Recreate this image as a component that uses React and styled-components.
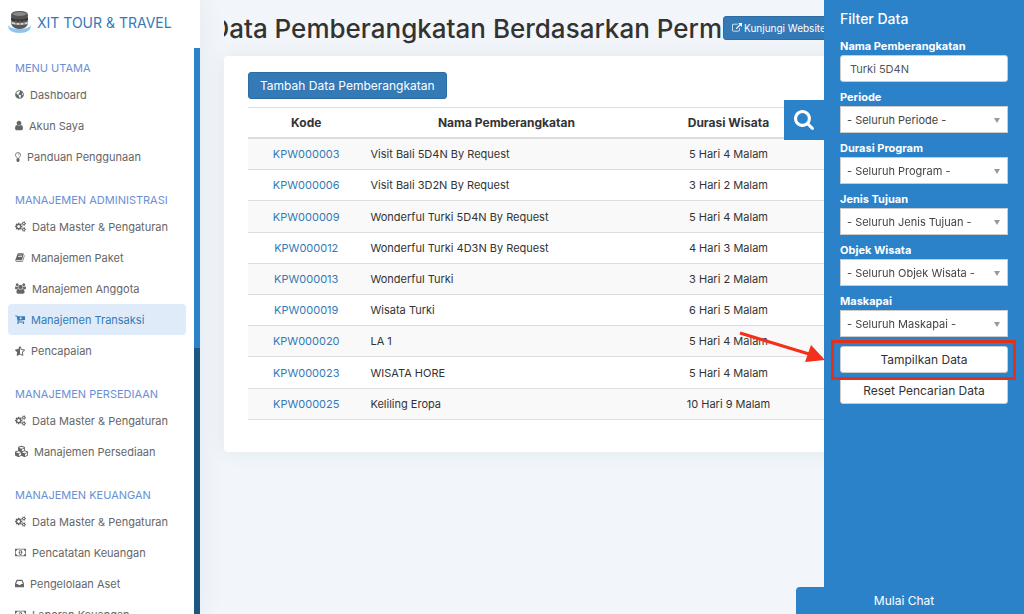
import React from 'react';
import styled, { createGlobalStyle } from 'styled-components';
import { FaCubes, FaGlobeAmericas, FaStarHalfAlt } from 'react-icons/fa';

const GlobalStyle = createGlobalStyle`
  * {
    box-sizing: border-box;
  }
  body {
    margin: 0;
    background: #f2f6fa;
    color: #333;
    font-family: Inter, 'Open Sans', sans-serif;
    font-size: 11px;
  }
  button, input, select {
    font: inherit;
  }
`;

const StyledPage = styled.div`
  display: flex;
  height: 100vh;
  overflow: hidden;
`;

/* Sidebar */
const StyledSidebar = styled.aside`
  display: flex;
  flex: none;
  flex-direction: column;
  width: 200px;
  background: white;
  box-shadow: 0 0 24px rgba(40, 70, 120, 0.08);
`;
const StyledBrand = styled.a`
  display: flex;
  flex: none;
  align-items: center;
  gap: 6px;
  height: 48px;
  padding: 0 8px 4px;
  color: #337ab7;
  font-size: 14px;
  text-decoration: none;
  white-space: nowrap;
`;
const StyledSidebarBody = styled.div`
  display: flex;
  flex: 1;
  min-height: 0;
`;
const StyledNav = styled.nav`
  display: flex;
  flex: 1;
  flex-direction: column;
  gap: 17px;
  padding: 9px 8px 0;
  overflow: hidden;
`;
const StyledNavTitle = styled.h2`
  margin: 0;
  padding-left: 7px;
  color: #6a8fd4;
  font-size: 11px;
  font-weight: 400;
  line-height: 22px;
  white-space: nowrap;
`;
const StyledNavLink = styled.a`
  display: flex;
  align-items: center;
  gap: 6px;
  height: 31px;
  padding-left: 7px;
  border-radius: 4px;
  background: ${(props) => (props.$active ? '#e0ebfa' : 'transparent')};
  color: ${(props) => (props.$active ? '#337ab7' : '#666')};
  text-decoration: none;
  white-space: nowrap;
`;
const StyledTrack = styled.div`
  flex: none;
  width: 6px;
  background: #1d5780;
`;
const StyledThumb = styled.div`
  height: 53%;
  background: #2b82c9;
`;

/* Content */
const StyledMain = styled.main`
  flex: 1;
  min-width: 0;
  padding: 0 24px;
`;
const StyledHeader = styled.header`
  display: flex;
  align-items: center;
  height: 56px;
`;
const StyledHeading = styled.div`
  display: flex;
  flex: 1;
  justify-content: flex-end;
  min-width: 0;
  padding-top: 2px;
  overflow: hidden;
`;
const StyledHeadingText = styled.h1`
  margin: 0;
  font-size: 26px;
  font-weight: 500;
  line-height: 36px;
  white-space: nowrap;
`;
const StyledHeaderActions = styled.div`
  flex: 0 0 278px;
  padding-left: 1px;
`;
const StyledSiteButton = styled.button`
  display: inline-flex;
  align-items: center;
  gap: 2px;
  height: 24px;
  padding: 0 8px;
  border: 1px solid #2e6da4;
  border-radius: 3px;
  background: #337ab7;
  color: white;
  font-size: 10px;
  white-space: nowrap;
`;
const StyledCard = styled.section`
  padding: 16px 24px 32px;
  border-radius: 4px;
  background: white;
  box-shadow: 0 0 20px rgba(40, 60, 90, 0.08);
`;
const StyledAddButton = styled.button`
  display: block;
  height: 27px;
  margin-bottom: 8px;
  padding: 0 11px;
  border: 1px solid #2e6da4;
  border-radius: 3px;
  background: #337ab7;
  color: white;
  font-size: 12px;
  white-space: nowrap;
`;
const StyledTable = styled.table`
  width: 100%;
  height: 313px;
  border-collapse: collapse;
  table-layout: fixed;

  th {
    height: 30px;
    padding: 0 6px;
    border-top: 1px solid #ddd;
    border-bottom: 2px solid #ddd;
    font-size: 12px;
    font-weight: 700;
    text-align: center;
  }
  td {
    padding: 0 6px;
    border-bottom: 1px solid #ddd;
  }
  tbody tr:nth-child(odd) {
    background: #f9f9f9;
  }
`;
const StyledCol = styled.col`
  width: ${(props) => props.$width};
`;
const StyledCell = styled.td`
  text-align: ${(props) => props.$align || 'left'};
`;
const StyledCodeLink = styled.a`
  color: #337ab7;
  text-decoration: none;
`;

/* Filter drawer */
const StyledDrawer = styled.aside`
  position: fixed;
  top: 0;
  right: 0;
  bottom: 0;
  width: 200px;
  padding: 8px 16px;
  background: #2b82c9;
  color: white;
`;
const StyledDrawerToggle = styled.button`
  position: absolute;
  top: 100px;
  right: 100%;
  display: flex;
  align-items: center;
  justify-content: center;
  width: 40px;
  height: 40px;
  padding: 0;
  border: 0;
  background: #2b82c9;
  color: white;
`;
const StyledDrawerTitle = styled.h2`
  margin: 0 0 7px;
  font-size: 14px;
  font-weight: 500;
  line-height: 22px;
`;
const StyledField = styled.div`
  display: flex;
  flex-direction: column;
  margin-bottom: 6px;
`;
const StyledLabel = styled.label`
  font-size: 11px;
  font-weight: 700;
  line-height: 18px;
`;
const StyledInput = styled.input`
  width: 100%;
  height: 27px;
  padding: 0 9px;
  border: 1px solid #ccc;
  border-radius: 3px;
  background: white;
  color: #555;
`;
const StyledSelectWrapper = styled.div`
  position: relative;

  &::after {
    position: absolute;
    top: 12px;
    right: 8px;
    border: 3px solid transparent;
    border-top: 5px solid #999;
    border-bottom: 0;
    content: '';
    pointer-events: none;
  }
`;
const StyledSelect = styled.select`
  display: block;
  width: 100%;
  height: 27px;
  padding: 0 16px 0 6px;
  border: 1px solid #ccc;
  border-radius: 0;
  appearance: none;
  background: white;
  color: #444;
`;
const StyledDrawerActions = styled.div`
  display: flex;
  flex-direction: column;
  gap: 4px;
  padding-top: 3px;
`;
const StyledDrawerButton = styled.button`
  width: 100%;
  height: 27px;
  border: 1px solid #ccc;
  border-radius: 3px;
  background: white;
  color: #333;
  font-size: 12px;
`;
const StyledHighlight = styled.div`
  position: relative;

  &::after {
    position: absolute;
    inset: -6px -8px -7px -9px;
    border: 3px solid #e2301a;
    content: '';
    pointer-events: none;
  }
`;
const StyledArrow = styled.svg`
  position: absolute;
  top: -18px;
  right: calc(100% + 15px);
  width: 88px;
  height: 38px;
`;
const StyledChat = styled.button`
  position: fixed;
  right: 12px;
  bottom: 0;
  width: 216px;
  height: 27px;
  padding: 0;
  border: 0;
  border-radius: 4px 0 0 0;
  background: #2b82c9;
  color: white;
  font-size: 12px;
`;

const gear =
  'v140q0 16-149 31-12 27-30 52 51 113 51 138 0 4-4 7-122 71-124 71-8 0-46-47t-52-68q-20 2-30 2t-30-2q-14 21-52 68t-46 47q-2 0-124-71-4-3-4-7 0-25 51-138-18-25-30-52-149-15-149-31v-140q0-16 149-31 13-29 30-52-51-113-51-138 0-4 4-7 4-2 35-20t59-34 30-16q8 0 46 46.5t52 67.5q20-2 30-2t30 2q51-71 92-112l6-2q4 0 124 70 4 3 4 7 0 25-51 138 17 23 30 52 149 15 149 31z';

const Glyph = ({ d, box = '0 0 1792 1792', width = 11, height = 11 }) => (
  <svg
    viewBox={box}
    width={width}
    height={height}
    fill="currentColor"
    aria-hidden="true"
  >
    <path d={d} />
  </svg>
);

const UserIcon = () => (
  <Glyph
    box="256 0 1280 1792"
    width={8}
    d="M1536 1399q0 109-62.5 187t-150.5 78h-854q-88 0-150.5-78t-62.5-187q0-85 8.5-160.5t31.5-152 58.5-131 94-89 134.5-34.5q131 128 313 128t313-128q76 0 134.5 34.5t94 89 58.5 131 31.5 152 8.5 160.5zm-256-887q0 159-112.5 271.5t-271.5 112.5-271.5-112.5-112.5-271.5 112.5-271.5 271.5-112.5 271.5 112.5 112.5 271.5z"
  />
);
const BulbIcon = () => (
  <svg width="6" height="10" viewBox="0 0 12 20" aria-hidden="true">
    <path
      d="M4 13Q4 11 2.500 9.500Q1 8 1 6Q1 1 6 1T11 6Q11 8 9.500 9.500Q8 11 8 13z"
      fill="none"
      stroke="currentColor"
      strokeWidth="1.600"
    />
    <path
      d="M6 4Q8.500 4 8.500 6"
      fill="none"
      stroke="currentColor"
      strokeWidth="1.200"
    />
    <path d="M3 14h6v4l-2 2h-2l-2-2z" fill="currentColor" />
  </svg>
);
const CogsIcon = () => (
  <Glyph
    box="0 0 1920 1792"
    d={`M896 896q0-106-75-181t-181-75-181 75-75 181 75 181 181 75 181-75 75-181zm768 512q0-52-38-90t-90-38-90 38-38 90q0 53 37.5 90.5t90.5 37.5 90.5-37.5 37.5-90.5zm0-1024q0-52-38-90t-90-38-90 38-38 90q0 53 37.5 90.5t90.5 37.5 90.5-37.5 37.5-90.5zm-384 421v185q0 10-7 19.5t-16 10.5l-155 24q-11 35-32 76 34 48 90 115 7 11 7 20 0 12-7 19-23 30-82.5 89.5t-78.5 59.5q-11 0-21-7l-115-90q-37 19-77 31-11 108-23 155-7 24-30 24h-186q-11 0-20-7.5t-10-17.5l-23-153q-34-10-75-31l-118 89q-7 7-20 7-11 0-21-8-144-133-144-160 0-9 7-19 10-14 41-53t47-61q-23-44-35-82l-152-24q-10-1-17-9.5t-7-19.5v-185q0-10 7-19.5t16-10.5l155-24q11-35 32-76-34-48-90-115-7-11-7-20 0-12 7-20 22-30 82-89t79-59q11 0 21 7l115 90q34-18 77-32 11-108 23-154 7-24 30-24h186q11 0 20 7.5t10 17.5l23 153q34 10 75 31l118-89q8-7 20-7 11 0 21 8 144 133 144 160 0 8-7 19-12 16-42 54t-45 60q23 48 34 82l152 23q10 2 17 10.5t7 19.5zM1920 1338${gear}M1920 314${gear}`}
  />
);
const BookIcon = () => (
  <Glyph
    width={10}
    d="M1703 478q40 57 18 129l-275 906q-19 64-76.5 107.5t-122.5 43.5h-923q-77 0-148.5-53.5t-99.5-131.5q-24-67-2-127 0-4 3-27t4-37q1-8-3-21.5t-3-19.5q2-11 8-21t16.5-23.5 16.5-23.5q23-38 45-91.5t30-91.5q3-10 .5-30t-.5-28q3-11 17-28t17-23q21-36 42-92t25-90q1-9-2.5-32t.5-28q4-13 22-30.5t22-22.5q19-26 42.5-84.5t27.5-96.5q1-8-3-25.5t-2-26.5q2-8 9-18t18-23 17-21q8-12 16.5-30.5t15-35 16-36 19.5-32 26.5-23.5 36-11.5 47.5 5.5l-1 3q38-9 51-9h761q74 0 114 56t18 130l-274 906q-36 119-71.5 153.5t-128.5 34.5h-869q-27 0-38 15-11 16-1 43 24 70 144 70h923q29 0 56-15.5t35-41.5l300-987q7-22 5-57 38 15 59 43zm-1064 2q-4 13 2 22.5t20 9.5h608q13 0 25.5-9.5t16.5-22.5l21-64q4-13-2-22.5t-20-9.5h-608q-13 0-25.5 9.5t-16.5 22.5zm-83 256q-4 13 2 22.5t20 9.5h608q13 0 25.5-9.5t16.5-22.5l21-64q4-13-2-22.5t-20-9.5h-608q-13 0-25.5 9.5t-16.5 22.5z"
  />
);
const UsersIcon = () => (
  <Glyph
    box="0 0 1920 1792"
    d="M593 896q-162 5-265 128h-134q-82 0-138-40.5t-56-118.5q0-353 124-353 6 0 43.5 21t97.5 42.5 119 21.5q67 0 133-23-5 37-5 66 0 139 81 256zm1071 637q0 120-73 189.5t-194 69.5h-874q-121 0-194-69.5t-73-189.5q0-53 3.5-103.5t14-109 26.5-108.5 43-97.5 62-81 85.5-53.5 111.5-20q10 0 43 21.5t73 48 107 48 135 21.5 135-21.5 107-48 73-48 43-21.5q61 0 111.5 20t85.5 53.5 62 81 43 97.5 26.5 108.5 14 109 3.5 103.5zm-1024-1277q0 106-75 181t-181 75-181-75-75-181 75-181 181-75 181 75 75 181zm704 384q0 159-112.5 271.5t-271.5 112.5-271.5-112.5-112.5-271.5 112.5-271.5 271.5-112.5 271.5 112.5 112.5 271.5zm576 225q0 78-56 118.5t-138 40.5h-134q-103-123-265-128 81-117 81-256 0-29-5-66 66 23 133 23 59 0 119-21.5t97.5-42.5 43.5-21q124 0 124 353zm-128-609q0 106-75 181t-181 75-181-75-75-181 75-181 181-75 181 75 75 181z"
  />
);
const CartIcon = () => (
  <Glyph
    box="64 128 1664 1600"
    width={10}
    d="M1280 704q0-26-19-45t-45-19h-128v-128q0-26-19-45t-45-19-45 19-19 45v128h-128q-26 0-45 19t-19 45 19 45 45 19h128v128q0 26 19 45t45 19 45-19 19-45v-128h128q26 0 45-19t19-45zM704 1536a128 128 0 1 1-256 0a128 128 0 1 1 256 0zM1600 1536a128 128 0 1 1-256 0a128 128 0 1 1 256 0zM1728 448v512q0 24-16 42.5t-41 21.5l-1044 122q1 7 4.500 21.500t6 26.500 2.500 22q0 16-24 64h920q26 0 45 19t19 45-19 45-45 19h-1024q-26 0-45-19t-19-45q0-14 11-39.500t29.500-59.500 20.500-38l-177-823h-204q-26 0-45-19t-19-45 19-45 45-19h256q16 0 28.500 6.500t20 15.500 13 24.500 7.500 26.500 5.500 29.500 4.500 25.500h1201q26 0 45 19t19 45z"
  />
);
const MoneyIcon = () => (
  <Glyph
    box="0 0 1920 1792"
    d="M768 1152h384v-96h-128v-448h-114l-148 137 77 80q42-37 55-57h2v288h-128v96zm512-256q0 70-21 142t-59.5 134-101.500 101-138 39-138-39-101.500-101-59.500-134-21-142 21-142 59.500-134 101.500-101 138-39 138 39 101.500 101 59.500 134 21 142zm512 256v-512q-106 0-181-75t-75-181h-1152q0 106-75 181t-181 75v512q106 0 181 75t75 181h1152q0-106 75-181t181-75zm128-832v1152q0 26-19 45t-45 19h-1792q-26 0-45-19t-19-45v-1152q0-26 19-45t45-19h1792q26 0 45 19t19 45z"
  />
);
const InboxIcon = () => (
  <Glyph
    box="128 128 1536 1536"
    width={9}
    d="M1151 960h316q-1-3-2.5-8.5t-2.5-7.5l-212-496h-708l-212 496q-1 3-2.5 8.5t-2.5 7.5h316l95 192h320zm513 30v482q0 26-19 45t-45 19h-1408q-26 0-45-19t-19-45v-482q0-62 25-123l238-552q10-25 36.5-42t52.5-17h832q26 0 52.5 17t36.5 42l238 552q25 61 25 123z"
  />
);
const ExternalLinkIcon = () => (
  <Glyph
    width={10}
    height={10}
    d="M1408 928v320q0 119-84.5 203.5t-203.5 84.5h-832q-119 0-203.500-84.500t-84.500-203.500v-832q0-119 84.500-203.500t203.500-84.500h704q14 0 23 9t9 23v64q0 14-9 23t-23 9h-704q-66 0-113 47t-47 113v832q0 66 47 113t113 47h832q66 0 113-47t47-113v-320q0-14 9-23t23-9h64q14 0 23 9t9 23zm384-864v512q0 26-19 45t-45 19-45-19l-176-176-652 652q-10 10-23 10t-23-10l-114-114q-10-10-10-23t10-23l652-652-176-176q-19-19-19-45t19-45 45-19h512q26 0 45 19t19 45z"
  />
);
const SearchIcon = () => (
  <Glyph
    box="0 0 1664 1664"
    width={20}
    height={20}
    d="M1152 704q0-185-131.5-316.5t-316.5-131.5-316.5 131.5-131.5 316.500 131.500 316.500 316.500 131.500 316.500-131.500 131.500-316.500zm512 832q0 52-38 90t-90 38q-54 0-90-38l-343-342q-179 124-399 124-143 0-273.500-55.500t-225-150-150-225-55.500-273.500 55.500-273.500 150-225 225-150 273.500-55.500 273.500 55.500 225 150 150 225 55.500 273.500q0 220-124 399l343 343q37 37 37 90z"
  />
);

const Logo = () => (
  <svg width="23" height="24" viewBox="0 0 23 24" aria-hidden="true">
    <path
      d="M0 15Q0 23 11.500 23T23 15Q21 19 11.500 19T0 15z"
      fill="#8cc4f2"
    />
    <path d="M3 5Q3 1 11.500 1T20 5L19.500 15Q17 19 11.500 19T3.500 15z" fill="#555" />
    <path d="M4 4Q6 2 11.500 2T19 4Q16 6 11.500 6T4 4z" fill="#8a8a8a" />
    <path d="M3 8Q11 11 20 8V10Q11 13 3 10z" fill="#333" />
    <path d="M4 12Q11 14 19.500 12V14Q11 16 4 14z" fill="#d5d5d5" />
    <path d="M8 10V17M12 10V17M16 10V16" stroke="#666" strokeWidth="1" />
  </svg>
);

const sections = [
  {
    title: 'MENU UTAMA',
    items: [
      { label: 'Dashboard', icon: <FaGlobeAmericas size={9} /> },
      { label: 'Akun Saya', icon: <UserIcon /> },
      { label: 'Panduan Penggunaan', icon: <BulbIcon /> },
    ],
  },
  {
    title: 'MANAJEMEN ADMINISTRASI',
    items: [
      { label: 'Data Master & Pengaturan', icon: <CogsIcon /> },
      { label: 'Manajemen Paket', icon: <BookIcon /> },
      { label: 'Manajemen Anggota', icon: <UsersIcon /> },
      { label: 'Manajemen Transaksi', icon: <CartIcon />, active: true },
      { label: 'Pencapaian', icon: <FaStarHalfAlt size={10} /> },
    ],
  },
  {
    title: 'MANAJEMEN PERSEDIAAN',
    items: [
      { label: 'Data Master & Pengaturan', icon: <CogsIcon /> },
      { label: 'Manajemen Persediaan', icon: <FaCubes size={13} /> },
    ],
  },
  {
    title: 'MANAJEMEN KEUANGAN',
    items: [
      { label: 'Data Master & Pengaturan', icon: <CogsIcon /> },
      { label: 'Pencatatan Keuangan', icon: <MoneyIcon /> },
      { label: 'Pengelolaan Aset', icon: <InboxIcon /> },
      { label: 'Laporan Keuangan', icon: <MoneyIcon /> },
    ],
  },
];

const departures = [
  ['KPW000003', 'Visit Bali 5D4N By Request', '5 Hari 4 Malam'],
  ['KPW000006', 'Visit Bali 3D2N By Request', '3 Hari 2 Malam'],
  ['KPW000009', 'Wonderful Turki 5D4N By Request', '5 Hari 4 Malam'],
  ['KPW000012', 'Wonderful Turki 4D3N By Request', '4 Hari 3 Malam'],
  ['KPW000013', 'Wonderful Turki', '3 Hari 2 Malam'],
  ['KPW000019', 'Wisata Turki', '6 Hari 5 Malam'],
  ['KPW000020', 'LA 1', '5 Hari 4 Malam'],
  ['KPW000023', 'WISATA HORE', '5 Hari 4 Malam'],
  ['KPW000025', 'Keliling Eropa', '10 Hari 9 Malam'],
];

const filters = [
  { id: 'periode', label: 'Periode', value: '- Seluruh Periode -' },
  { id: 'program', label: 'Durasi Program', value: '- Seluruh Program -' },
  { id: 'tujuan', label: 'Jenis Tujuan', value: '- Seluruh Jenis Tujuan -' },
  { id: 'objek', label: 'Objek Wisata', value: '- Seluruh Objek Wisata -' },
  { id: 'maskapai', label: 'Maskapai', value: '- Seluruh Maskapai -' },
];

const Sidebar = () => (
  <StyledSidebar>
    <StyledBrand href="#">
      <Logo />
      XIT TOUR &amp; TRAVEL
    </StyledBrand>
    <StyledSidebarBody>
      <StyledNav>
        {sections.map((section) => (
          <div key={section.title}>
            <StyledNavTitle>{section.title}</StyledNavTitle>
            {section.items.map((item) => (
              <StyledNavLink key={item.label} href="#" $active={item.active}>
                {item.icon}
                {item.label}
              </StyledNavLink>
            ))}
          </div>
        ))}
      </StyledNav>
      <StyledTrack>
        <StyledThumb />
      </StyledTrack>
    </StyledSidebarBody>
  </StyledSidebar>
);

const DepartureTable = () => (
  <StyledTable>
    <colgroup>
      <StyledCol $width="16%" />
      <StyledCol $width="39%" />
      <StyledCol $width="22%" />
      <StyledCol $width="23%" />
    </colgroup>
    <thead>
      <tr>
        <th scope="col">Kode</th>
        <th scope="col">Nama Pemberangkatan</th>
        <th scope="col">Durasi Wisata</th>
        <th />
      </tr>
    </thead>
    <tbody>
      {departures.map(([code, name, duration]) => (
        <tr key={code}>
          <StyledCell $align="center">
            <StyledCodeLink href="#">{code}</StyledCodeLink>
          </StyledCell>
          <StyledCell>{name}</StyledCell>
          <StyledCell $align="center">{duration}</StyledCell>
          <StyledCell />
        </tr>
      ))}
    </tbody>
  </StyledTable>
);

const FilterDrawer = () => (
  <StyledDrawer>
    <StyledDrawerToggle type="button" aria-label="Filter">
      <SearchIcon />
    </StyledDrawerToggle>
    <StyledDrawerTitle>Filter Data</StyledDrawerTitle>
    <StyledField>
      <StyledLabel htmlFor="nama">Nama Pemberangkatan</StyledLabel>
      <StyledInput id="nama" type="text" defaultValue="Turki 5D4N" />
    </StyledField>
    {filters.map((filter) => (
      <StyledField key={filter.id}>
        <StyledLabel htmlFor={filter.id}>{filter.label}</StyledLabel>
        <StyledSelectWrapper>
          <StyledSelect id={filter.id}>
            <option>{filter.value}</option>
          </StyledSelect>
        </StyledSelectWrapper>
      </StyledField>
    ))}
    <StyledDrawerActions>
      <StyledHighlight>
        <StyledDrawerButton type="button">Tampilkan Data</StyledDrawerButton>
        <StyledArrow viewBox="0 0 88 38" aria-hidden="true">
          <path d="M3 5L72 26" stroke="#f5301a" strokeWidth="3" />
          <path d="M74 17L88 32L68 34z" fill="#f5301a" />
        </StyledArrow>
      </StyledHighlight>
      <StyledDrawerButton type="button">Reset Pencarian Data</StyledDrawerButton>
    </StyledDrawerActions>
  </StyledDrawer>
);

export default function App() {
  return (
    <StyledPage>
      <GlobalStyle />
      <Sidebar />
      <StyledMain>
        <StyledHeader>
          <StyledHeading>
            <StyledHeadingText>
              Data Pemberangkatan Berdasarkan Perm
            </StyledHeadingText>
          </StyledHeading>
          <StyledHeaderActions>
            <StyledSiteButton type="button">
              <ExternalLinkIcon />
              Kunjungi Website
            </StyledSiteButton>
          </StyledHeaderActions>
        </StyledHeader>
        <StyledCard>
          <StyledAddButton type="button">
            Tambah Data Pemberangkatan
          </StyledAddButton>
          <DepartureTable />
        </StyledCard>
      </StyledMain>
      <FilterDrawer />
      <StyledChat type="button">Mulai Chat</StyledChat>
    </StyledPage>
  );
}
